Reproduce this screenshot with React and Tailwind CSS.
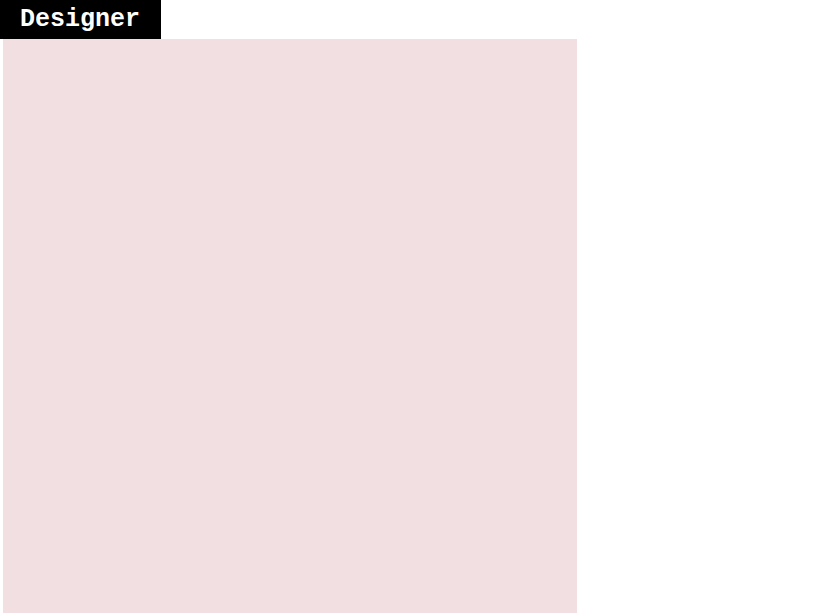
export default function App() {
  return (
    <div className="min-h-screen bg-white">
      <div className="flex h-[39px] w-[161px] items-center bg-black pl-[20px] font-['Liberation_Mono',monospace] text-[25px] font-bold leading-none text-white">
        Designer
      </div>
      <div className="ml-[3px] h-[574px] w-[574px] bg-[#f2dfe1]" />
    </div>
  );
}
